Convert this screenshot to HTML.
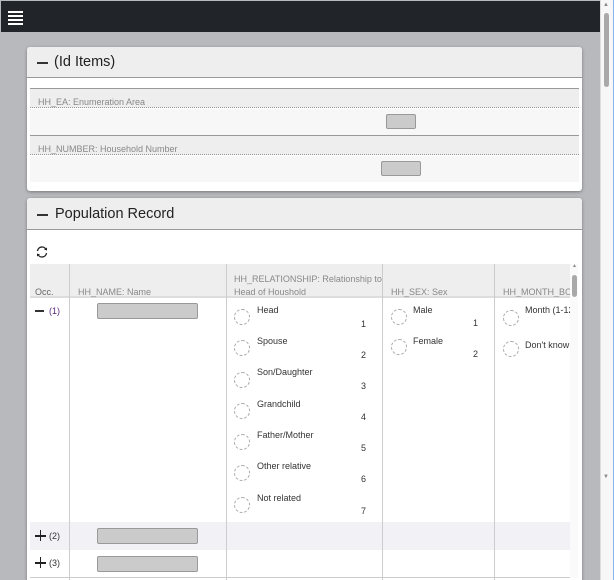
<!DOCTYPE html>
<html><head><meta charset="utf-8"><style>
*{box-sizing:border-box;margin:0;padding:0}
html,body{width:614px;height:580px;overflow:hidden}
body{background:#b8b9bd;font-family:"Liberation Sans",sans-serif;position:relative}
.a{position:absolute}
.top{left:1px;top:1px;width:600px;height:31px;background:#212428}
.ham{left:8px;width:15px;height:2px;background:#fff}
.card{background:#fff;border-radius:3px;box-shadow:0 1px 3px rgba(0,0,0,.35)}
.hdr{background:#eeeeee;border-bottom:1px solid #999;border-radius:3px 3px 0 0}
.t{color:#222;font-size:14.5px}
.lbl{font-size:9px;color:#888}
.box{background:#cbcbcb;border:1px solid #999;border-radius:2px}
.rad{width:16px;height:16px;border:1px dashed #aaa;border-radius:50%}
.sm{font-size:9px;color:#333}
.vl{width:1px;background:#ccc}
</style></head><body>
<div class="a top"></div>
<div class="a ham" style="top:11px"></div><div class="a ham" style="top:15px"></div><div class="a ham" style="top:19px"></div><div class="a ham" style="top:23px"></div>
<div class="a" style="left:600px;top:0;width:14px;height:580px;background:#f7f7f7;border-left:1px solid #ddd;border-right:1px solid #8ab4e8"></div>
<div class="a" style="left:604px;top:13px;width:5px;height:74px;background:#a9a9a9;border-radius:3px"></div>
<div class="a" style="left:603px;top:2px;font-size:6px;color:#888">▲</div>
<div class="a" style="left:603px;top:474px;font-size:6px;color:#888">▼</div>

<div class="a card" style="left:27px;top:47px;width:555px;height:144px">
 <div class="a hdr" style="left:0;top:0;width:555px;height:31px"></div>
 <div class="a" style="left:10px;top:15px;width:11px;height:2px;background:#333"></div>
 <div class="a t" style="left:27px;top:7px">(Id Items)</div>
 <div class="a" style="left:3px;top:41px;width:549px;height:1px;background:#999"></div>
 <div class="a" style="left:3px;top:42px;width:549px;height:19px;background:#eee;border-bottom:1px dotted #999"></div>
 <div class="a lbl" style="left:11px;top:50px">HH_EA: Enumeration Area</div>
 <div class="a" style="left:3px;top:62px;width:549px;height:26px;background:#f7f7f7"></div>
 <div class="a box" style="left:359px;top:67px;width:30px;height:15px"></div>
 <div class="a" style="left:3px;top:88px;width:549px;height:1px;background:#999"></div>
 <div class="a" style="left:3px;top:89px;width:549px;height:19px;background:#eee;border-bottom:1px dotted #999"></div>
 <div class="a lbl" style="left:11px;top:97px">HH_NUMBER: Household Number</div>
 <div class="a" style="left:3px;top:109px;width:549px;height:26px;background:#f7f7f7"></div>
 <div class="a box" style="left:354px;top:114px;width:40px;height:15px"></div>
</div>

<div class="a card" style="left:27px;top:198px;width:555px;height:390px">
 <div class="a hdr" style="left:0;top:0;width:555px;height:32px"></div>
 <div class="a" style="left:10px;top:16px;width:11px;height:2px;background:#333"></div>
 <div class="a t" style="left:28px;top:8px">Population Record</div>
 <svg class="a" style="left:8px;top:47px" width="14" height="14" viewBox="0 0 14 14"><path d="M2.5 6A4.5 4.5 0 0 1 11 4.5M11.5 8A4.5 4.5 0 0 1 3 9.5" fill="none" stroke="#222" stroke-width="1.3"/><path d="M9 4.5L12 5.5 12 2.5Z M5 9.5L2 8.5 2 11.5Z" fill="#222"/></svg>
 <div class="a" style="left:3px;top:66px;width:540px;height:34px;background:#eee;border-bottom:2px solid #ddd"></div>
 <div class="a" style="left:3px;top:324px;width:540px;height:28px;background:#f2f2f6"></div>
 <div class="a" style="left:3px;top:352px;width:540px;height:28px;border-bottom:1px solid #ccc"></div>
 <div class="a vl" style="left:42px;top:66px;height:330px"></div>
 <div class="a vl" style="left:199px;top:66px;height:330px"></div>
 <div class="a vl" style="left:355px;top:66px;height:330px"></div>
 <div class="a vl" style="left:467px;top:66px;height:330px"></div>
 <div class="a lbl" style="left:8px;top:89px;color:#666">Occ.</div>
 <div class="a lbl" style="left:51px;top:89px">HH_NAME: Name</div>
 <div class="a lbl" style="left:207px;top:75px;line-height:13px;width:150px">HH_RELATIONSHIP: Relationship to Head of Houshold</div>
 <div class="a lbl" style="left:364px;top:89px">HH_SEX: Sex</div>
 <div class="a lbl" style="left:476px;top:89px;width:67px;overflow:hidden;white-space:nowrap">HH_MONTH_BORN</div>
 <div class="a" style="left:543px;top:66px;width:8px;height:314px;background:#fafafa"></div>
 <div class="a" style="left:545px;top:77px;width:5px;height:22px;background:#a9a9a9;border-radius:3px"></div>
 <div class="a" style="left:545px;top:65px;font-size:5px;color:#888">▲</div>

 <div class="a" style="left:8px;top:112px;width:9px;height:2px;background:#333"></div>
 <div class="a sm" style="left:22px;top:108px;color:#5a2a7a">(1)</div>
 <div class="a box" style="left:70px;top:105px;width:101px;height:16px"></div>
 <div class="a" style="left:8px;top:337px;width:11px;height:1.5px;background:#222"></div>
 <div class="a" style="left:12.7px;top:332px;width:1.5px;height:11px;background:#222"></div>
 <div class="a sm" style="left:22px;top:333px">(2)</div>
 <div class="a box" style="left:70px;top:330px;width:101px;height:16px"></div>
 <div class="a" style="left:8px;top:364px;width:11px;height:1.5px;background:#222"></div>
 <div class="a" style="left:12.7px;top:359px;width:1.5px;height:11px;background:#222"></div>
 <div class="a sm" style="left:22px;top:360px">(3)</div>
 <div class="a box" style="left:70px;top:358px;width:101px;height:16px"></div>
</div>

<div class="a rad" style="left:234px;top:309px"></div><div class="a sm" style="left:257px;top:305px">Head</div><div class="a sm" style="left:361px;top:319px">1</div>
<div class="a rad" style="left:234px;top:340px"></div><div class="a sm" style="left:257px;top:336px">Spouse</div><div class="a sm" style="left:361px;top:350px">2</div>
<div class="a rad" style="left:234px;top:372px"></div><div class="a sm" style="left:257px;top:367px">Son/Daughter</div><div class="a sm" style="left:361px;top:381px">3</div>
<div class="a rad" style="left:234px;top:403px"></div><div class="a sm" style="left:257px;top:399px">Grandchild</div><div class="a sm" style="left:361px;top:412px">4</div>
<div class="a rad" style="left:234px;top:434px"></div><div class="a sm" style="left:257px;top:430px">Father/Mother</div><div class="a sm" style="left:361px;top:443px">5</div>
<div class="a rad" style="left:234px;top:465px"></div><div class="a sm" style="left:257px;top:461px">Other relative</div><div class="a sm" style="left:361px;top:474px">6</div>
<div class="a rad" style="left:234px;top:497px"></div><div class="a sm" style="left:257px;top:493px">Not related</div><div class="a sm" style="left:361px;top:506px">7</div>
<div class="a rad" style="left:391px;top:309px"></div><div class="a sm" style="left:413px;top:305px">Male</div><div class="a sm" style="left:473px;top:318px">1</div>
<div class="a rad" style="left:391px;top:339px"></div><div class="a sm" style="left:413px;top:336px">Female</div><div class="a sm" style="left:473px;top:349px">2</div>
<div class="a rad" style="left:503px;top:310px"></div><div class="a sm" style="left:525px;top:305px;width:45px;overflow:hidden;white-space:nowrap">Month (1-12)</div>
<div class="a rad" style="left:503px;top:341px"></div><div class="a sm" style="left:525px;top:340px;width:45px;overflow:hidden;white-space:nowrap">Don't know</div>
</body></html>
